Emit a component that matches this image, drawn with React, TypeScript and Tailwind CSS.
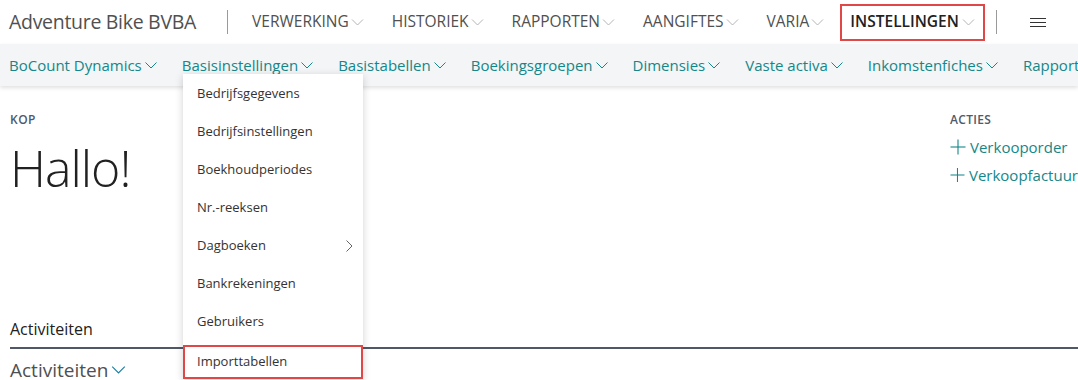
import React from "react";

const font = { fontFamily: '"Open Sans", "Noto Sans", sans-serif' };

function Chevron({ className = "" }: { className?: string }) {
  return (
    <svg viewBox="0 0 12 7" className={className} fill="none" stroke="currentColor" strokeWidth="1">
      <polyline points="0.5,0.5 6,6 11.5,0.5" />
    </svg>
  );
}

function Plus() {
  return (
    <svg viewBox="0 0 16 16" className="w-[16px] h-[16px] mr-[4px]" fill="none" stroke="currentColor" strokeWidth="1.1">
      <line x1="8" y1="0.5" x2="8" y2="15.5" />
      <line x1="0.5" y1="8" x2="15.5" y2="8" />
    </svg>
  );
}

const topNav = ["VERWERKING", "HISTORIEK", "RAPPORTEN", "AANGIFTES", "VARIA"];
const subNav = [
  "BoCount Dynamics",
  "Basisinstellingen",
  "Basistabellen",
  "Boekingsgroepen",
  "Dimensies",
  "Vaste activa",
  "Inkomstenfiches",
  "Rapport",
];
const menu = [
  "Bedrijfsgegevens",
  "Bedrijfsinstellingen",
  "Boekhoudperiodes",
  "Nr.-reeksen",
  "Dagboeken",
  "Bankrekeningen",
  "Gebruikers",
  "Importtabellen",
];

export default function App() {
  return (
    <div className="relative w-[1078px] h-[380px] overflow-hidden bg-white" style={font}>
      {/* top header */}
      <header className="flex items-center h-[44px] pl-[9px] whitespace-nowrap">
        <span className="text-[19.5px] text-[#505050] tracking-[-0.3px]">Adventure Bike BVBA</span>
        <span className="ml-[31px] w-px h-[24px] bg-[#9a9a9a]" />
        <nav className="flex items-center ml-[24px] gap-[28px]">
          {topNav.map((t) => (
            <span key={t} className="flex items-center text-[15.5px] text-[#505050]">
              {t}
              <Chevron className="w-[13px] h-[7px] ml-[2px] text-[#b4b4b4]" />
            </span>
          ))}
        </nav>
        <span className="ml-[16px] flex items-center h-[37px] px-[8px] border-2 border-[#e04848]">
          <span className="text-[15.5px] font-semibold text-[#212121]">INSTELLINGEN</span>
          <Chevron className="w-[13px] h-[7px] ml-[3px] text-[#b4b4b4]" />
        </span>
        <span className="ml-[11px] w-px h-[24px] bg-[#9a9a9a]" />
        <span className="ml-[33px] flex flex-col gap-[3px]">
          <span className="block w-[16px] h-px bg-[#333]" />
          <span className="block w-[16px] h-px bg-[#333]" />
          <span className="block w-[16px] h-px bg-[#333]" />
        </span>
      </header>

      {/* sub nav */}
      <div className="flex items-center h-[42px] pl-[9px] gap-[25px] bg-[#f3f5f7] shadow-[0_2px_4px_rgba(0,0,0,0.12)] whitespace-nowrap relative z-10">
        {subNav.map((t) => (
          <span key={t} className="flex items-center text-[15px] text-[#138789]">
            {t}
            {t !== "Rapport" && <Chevron className="w-[12px] h-[7px] ml-[3px] text-[#138789]" />}
          </span>
        ))}
      </div>

      {/* content */}
      <div className="flex justify-between pl-[10px] pt-[25px]">
        <div>
          <div className="text-[12px] font-semibold text-[#4f5a6a] tracking-[0.5px]">KOP</div>
          <div className="text-[50px] font-light text-[#212121] leading-none mt-[14px] tracking-[-1px]">Hallo!</div>
        </div>
        <div className="w-[128px]">
          <div className="text-[12px] font-semibold text-[#4f5a6a] tracking-[0.3px]">ACTIES</div>
          <div className="flex items-center mt-[7px] text-[15px] text-[#138789] whitespace-nowrap">
            <Plus />Verkooporder
          </div>
          <div className="flex items-center mt-[5px] text-[15px] text-[#138789] whitespace-nowrap">
            <Plus />Verkoopfactuur
          </div>
        </div>
      </div>

      <div className="pl-[10px] mt-[124px]">
        <div className="text-[16px] text-[#212121] pb-[6px]">Activiteiten</div>
        <div className="h-[2px] bg-[#505868]" />
        <div className="flex items-center text-[19px] leading-[26px] text-[#505050] mt-[8px]">
          Activiteiten
          <Chevron className="w-[15px] h-[8px] ml-[3px] text-[#1a7fa0]" />
        </div>
      </div>

      {/* dropdown */}
      <div className="absolute left-[183px] top-[74px] w-[180px] bg-white shadow-[0_2px_8px_rgba(0,0,0,0.18)] z-20 pt-[1px]">
        {menu.map((m) => (
          <div
            key={m}
            className={
              "flex items-center justify-between pr-[10px] text-[13px] text-[#333]" +
              (m === "Importtabellen"
                ? " border-2 border-[#e04848] pl-[12px] h-[34px] mt-[4px]"
                : " h-[38px] pl-[14px]")
            }
          >
            {m}
            {m === "Dagboeken" && (
              <svg viewBox="0 0 7 12" className="w-[7px] h-[12px]" fill="none" stroke="#666" strokeWidth="1">
                <polyline points="0.5,0.5 6,6 0.5,11.5" />
              </svg>
            )}
          </div>
        ))}
      </div>
    </div>
  );
}
